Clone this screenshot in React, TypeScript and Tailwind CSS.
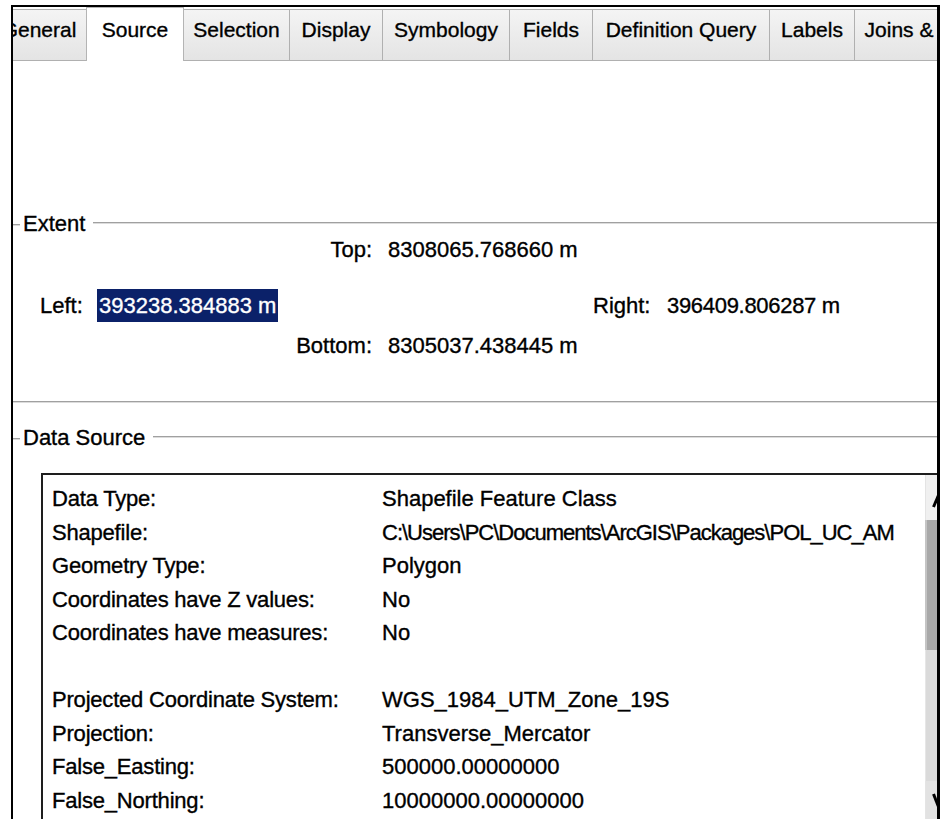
import React from 'react';

type Tab = { label: string; cls: string; active?: boolean };

// tab strip of the layer properties dialog, first tab scrolled partly out of view
const tabs: Tab[] = [
  { label: 'General', cls: 'w-[95px] -ml-[21px]' },
  { label: 'Source', cls: 'w-[98px] -ml-px', active: true },
  { label: 'Selection', cls: 'w-[106px]' },
  { label: 'Display', cls: 'w-[93px]' },
  { label: 'Symbology', cls: 'w-[127px]' },
  { label: 'Fields', cls: 'w-[83px]' },
  { label: 'Definition Query', cls: 'w-[177px]' },
  { label: 'Labels', cls: 'w-[85px]' },
  { label: 'Joins & Relates', cls: 'w-[166px]' },
];

const rows: [string, string][] = [
  ['Data Type:', 'Shapefile Feature Class'],
  ['Shapefile:', 'C:\\Users\\PC\\Documents\\ArcGIS\\Packages\\POL_UC_AM'],
  ['Geometry Type:', 'Polygon'],
  ['Coordinates have Z values:', 'No'],
  ['Coordinates have measures:', 'No'],
  ['', ''],
  ['Projected Coordinate System:', 'WGS_1984_UTM_Zone_19S'],
  ['Projection:', 'Transverse_Mercator'],
  ['False_Easting:', '500000.00000000'],
  ['False_Northing:', '10000000.00000000'],
];

const Etched = () => <div className="h-px bg-[#a0a0a0] shadow-[0_1px_0_#dcdcdc]" />;

const GroupTitle = ({ title, className }: { title: string; className: string }) => (
  <div className={`flex h-[26px] items-center ${className}`}>
    <div className="w-[7px] shrink-0">
      <Etched />
    </div>
    <span className="ml-[3px] whitespace-nowrap leading-[26px]">{title}</span>
    <div className="ml-[8px] flex-1 -translate-y-[2px]">
      <Etched />
    </div>
  </div>
);

const Scrollbar = () => (
  <div className="flex w-[12px] shrink-0 flex-col bg-[#dadada]">
    <div className="h-[45px] border-l border-[#e4e4e4] bg-[#f0f0f0]">
      <svg width="12" height="45" viewBox="0 0 12 45">
        <path d="M7.5 32 L13 19" stroke="#000" strokeWidth="3" fill="none" />
      </svg>
    </div>
    <div className="h-[130px] border-l-2 border-[#c4c4c4] bg-[#a8a8a8]" />
    <div className="flex-1 border-l border-[#e6e6e6]" />
    <div className="h-[45px] border-l border-[#e4e4e4] bg-[#e2e2e2]">
      <svg width="12" height="45" viewBox="0 0 12 45">
        <path d="M7.5 13 L13 27" stroke="#000" strokeWidth="3" fill="none" />
      </svg>
    </div>
  </div>
);

export default function App() {
  return (
    <div className="h-[819px] w-[942px] overflow-hidden bg-white pl-[11px] pt-[5px] font-['Liberation_Sans',Arial,sans-serif] text-black [-webkit-text-stroke:0.35px_#000]">
      <div className="flex h-[814px] w-[929px] flex-col overflow-hidden border-l-2 border-r-[3px] border-t-2 border-black">
        {/* Tabs */}
        <div className="flex h-[54px] shrink-0 items-end overflow-hidden">
          {tabs.map((t) =>
            t.active ? (
              <div
                key={t.label}
                className={`relative z-10 flex h-[54px] shrink-0 justify-center border-x border-t border-[#b4b4b4] bg-white pt-[10px] text-[21px] leading-[24px] ${t.cls}`}
              >
                {t.label}
              </div>
            ) : (
              <div
                key={t.label}
                className={`flex h-[52px] shrink-0 justify-center whitespace-nowrap border-b border-r border-t border-[#b0b0b0] bg-gradient-to-b from-[#f4f4f4] to-[#e4e4e4] pt-[8px] text-[21px] leading-[24px] ${t.cls}`}
              >
                {t.label}
              </div>
            ),
          )}
        </div>

        {/* Tab page */}
        <div className="flex flex-1 flex-col text-[22px]">
          <GroupTitle title="Extent" className="mt-[150px]" />

          <div className="flex h-[26px] items-center leading-[26px]">
            <span className="w-[359px] text-right">Top:</span>
            <span className="ml-[16px] whitespace-nowrap">8308065.768660 m</span>
          </div>

          <div className="mt-[26px] flex h-[33px] items-center leading-[26px]">
            <div className="flex w-[580px] items-center">
              <span className="ml-[27px] w-[57px]">Left:</span>
              <span className="flex h-[33px] items-center bg-[#0b2169] px-[2px] text-white [-webkit-text-stroke:0.35px_#fff]">
                393238.384883 m
              </span>
            </div>
            <span className="w-[74px]">Right:</span>
            <span className="whitespace-nowrap tracking-[-0.3px]">396409.806287 m</span>
          </div>

          <div className="mt-[11px] flex h-[26px] items-center leading-[26px]">
            <span className="w-[359px] text-right">Bottom:</span>
            <span className="ml-[16px] whitespace-nowrap">8305037.438445 m</span>
          </div>

          <div className="mt-[42px]">
            <Etched />
          </div>

          <GroupTitle title="Data Source" className="mt-[23px]" />

          {/* Data source list box */}
          <div className="ml-[28px] mt-[22px] flex h-[353px] shrink-0 border-l-2 border-t-2 border-[#1e1e1e]">
            <div className="flex-1 overflow-hidden pl-[9px] pt-[7px]">
              {rows.map(([k, v], i) => (
                <div key={i} className="flex h-[33.5px] items-center whitespace-nowrap">
                  <span className="w-[330px] shrink-0 tracking-[-0.2px]">{k}</span>
                  <span className={i === 1 ? 'tracking-[-1px]' : ''}>{v}</span>
                </div>
              ))}
            </div>
            <Scrollbar />
          </div>
        </div>
      </div>
    </div>
  );
}
